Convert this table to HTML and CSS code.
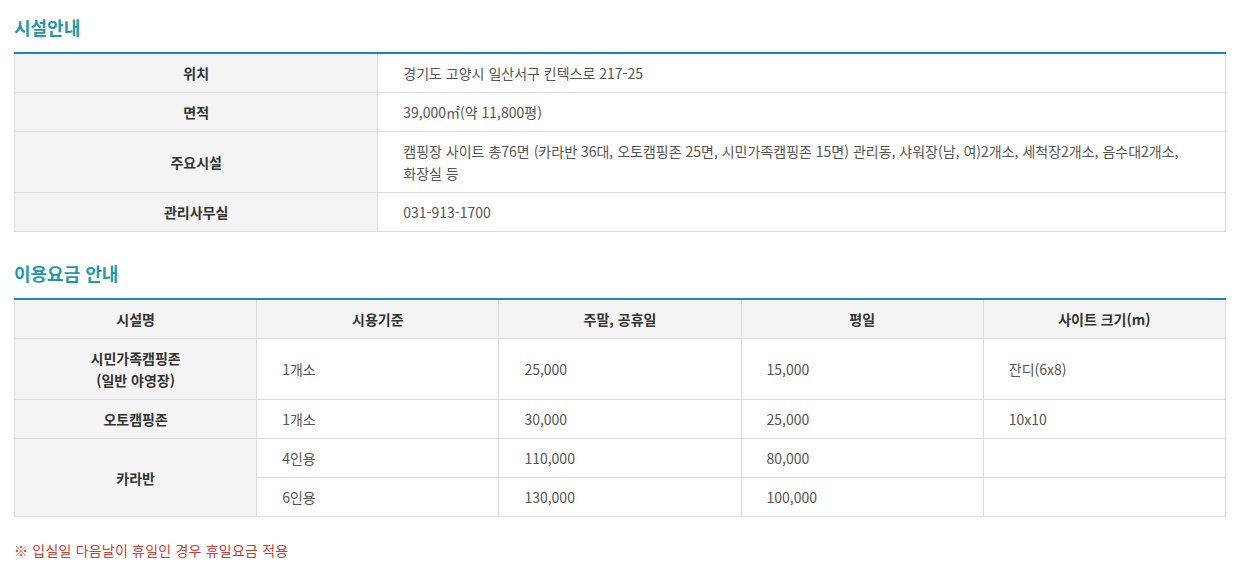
FILE: index.html
```html
<!DOCTYPE html>
<html lang="ko">
<head>
<meta charset="utf-8">
<title>시설안내</title>
<link rel="stylesheet" href="styles.css">
</head>
<body>
<div class="page">
  <section class="section">
    <h2 class="title">시설안내</h2>
    <table class="tbl tbl-info">
      <colgroup><col class="c-head"><col></colgroup>
      <tbody>
        <tr><th>위치</th><td>경기도 고양시 일산서구 킨텍스로 217-25</td></tr>
        <tr><th>면적</th><td>39,000㎡(약 11,800평)</td></tr>
        <tr><th>주요시설</th><td>캠핑장 사이트 총76면 (카라반 36대, 오토캠핑존 25면, 시민가족캠핑존 15면) 관리동, 샤워장(남, 여)2개소, 세척장2개소, 음수대2개소,<br>화장실 등</td></tr>
        <tr><th>관리사무실</th><td>031-913-1700</td></tr>
      </tbody>
    </table>
  </section>
  <section class="section">
    <h2 class="title">이용요금 안내</h2>
    <table class="tbl tbl-fee">
      <thead>
        <tr><th>시설명</th><th>시용기준</th><th>주말, 공휴일</th><th>평일</th><th>사이트 크기(m)</th></tr>
      </thead>
      <tbody>
        <tr><th>시민가족캠핑존<br>(일반 야영장)</th><td>1개소</td><td>25,000</td><td>15,000</td><td>잔디(6x8)</td></tr>
        <tr><th>오토캠핑존</th><td>1개소</td><td>30,000</td><td>25,000</td><td>10x10</td></tr>
        <tr><th rowspan="2">카라반</th><td>4인용</td><td>110,000</td><td>80,000</td><td></td></tr>
        <tr><td>6인용</td><td>130,000</td><td>100,000</td><td></td></tr>
      </tbody>
    </table>
    <p class="note">※ 입실일 다음날이 휴일인 경우 휴일요금 적용</p>
  </section>
</div>
</body>
</html>
```

FILE: styles.css
```css
html, body {
  margin: 0;
  padding: 0;
  background: #fff;
}
body {
  font-family: "Noto Sans CJK KR", "Noto Sans", sans-serif;
  font-size: 14px;
  color: #555;
}
.page {
  padding: 14px 26px 0 14px;
}
.section + .section {
  margin-top: 28px;
}
.title {
  margin: 0 0 12px;
  font-size: 18px;
  line-height: 26px;
  font-weight: 700;
  color: #1c9ba8;
  letter-spacing: 0;
}
.tbl {
  width: 100%;
  border-collapse: collapse;
  table-layout: fixed;
  border-top: 2px solid #1b84c8;
}
.tbl th,
.tbl td {
  border: 1px solid #dcdcdc;
  padding: 8px 25px;
  line-height: 22px;
  font-size: 14px;
  letter-spacing: 0;
}
.tbl tr:first-child th,
.tbl tr:first-child td {
  border-top: 0;
}
.tbl th {
  background: #f4f4f4;
  color: #333;
  font-weight: 700;
  text-align: center;
}
.tbl td {
  color: #555;
  text-align: left;
  font-weight: 400;
}
.c-head {
  width: 30%;
}
.tbl-fee thead th {
  border-top: 0;
}
.tbl-fee tbody tr:first-child th,
.tbl-fee tbody tr:first-child td {
  border-top: 1px solid #dcdcdc;
}
.note {
  margin: 22px 0 0;
  line-height: 22px;
  color: #d63a32;
  font-size: 14px;
  letter-spacing: 0.2px;
}
```
